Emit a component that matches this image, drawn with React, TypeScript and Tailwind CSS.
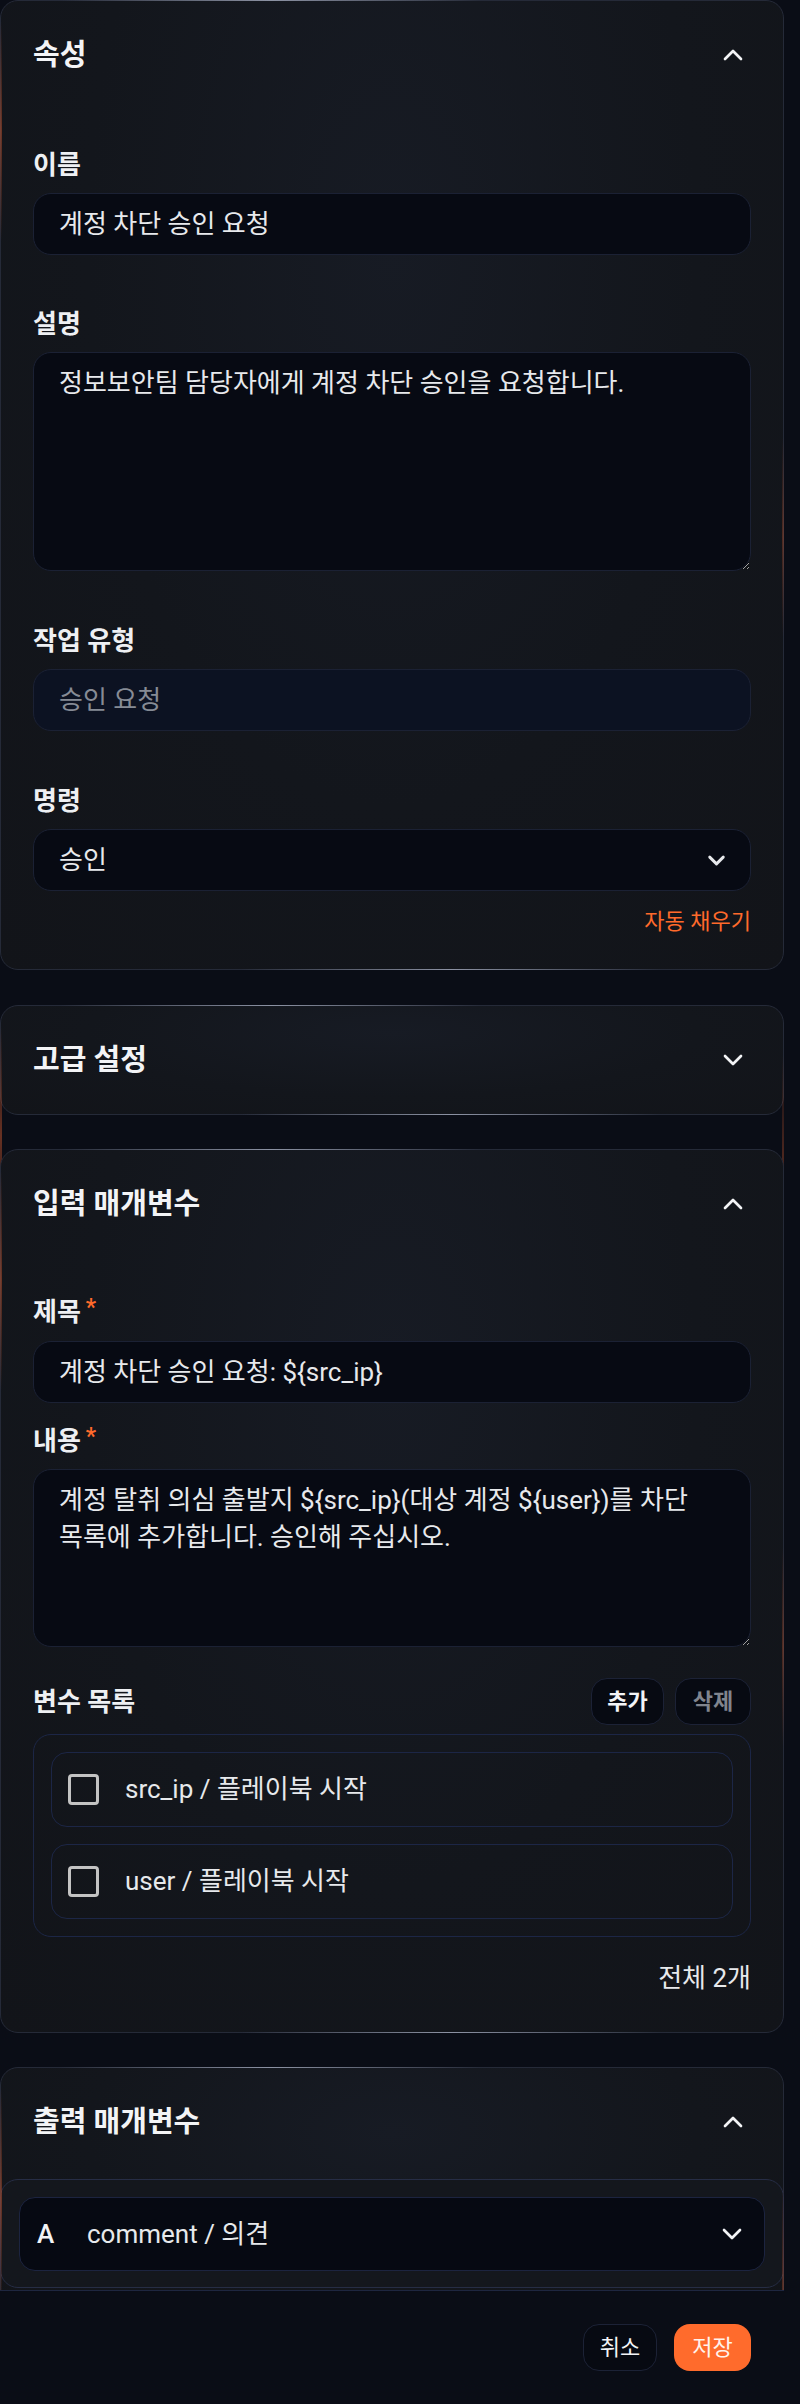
import React from 'react';
import { ChevronUp, ChevronDown } from 'lucide-react';

const FONT = "font-['Roboto','Noto_Sans_CJK_KR',sans-serif]";

function Label({ children, required }: { children: React.ReactNode; required?: boolean }) {
  return (
    <div className="flex items-start text-[26px] leading-[36px] font-semibold text-[#eef0f3]">
      <span>{children}</span>
      {required && <span className="ml-[5px] text-[23px] leading-[28px] text-[#ff6a2b]">*</span>}
    </div>
  );
}

function Card({
  title,
  open = true,
  className = '',
  children,
}: {
  title: string;
  open?: boolean;
  className?: string;
  children?: React.ReactNode;
}) {
  return (
    <div
      className={`relative shrink-0 rounded-[18px] border border-[#252a38] bg-[radial-gradient(ellipse_at_50%_25%,#171b24_0%,#13161c_55%,#121419_100%)] ${className}`}
    >
      {/* border shine */}
      <div className="pointer-events-none absolute -top-px left-[60px] h-px w-[420px] bg-gradient-to-r from-transparent via-[#8c92a3] to-transparent" />
      <div className="pointer-events-none absolute -bottom-px left-[240px] h-px w-[420px] bg-gradient-to-r from-transparent via-[#8c92a3] to-transparent" />
      <div className="pointer-events-none absolute -left-px top-[20px] h-[220px] w-[2px] bg-gradient-to-b from-transparent via-[#c4552e]/50 to-transparent" />
      <div className="pointer-events-none absolute -right-px top-[45%] h-[200px] w-[2px] bg-gradient-to-b from-transparent via-[#c4552e]/35 to-transparent" />

      <div className="flex h-[108px] items-center justify-between pl-[32px] pr-[34px]">
        <h2 className="text-[29px] leading-[40px] font-semibold text-[#f3f4f6]">{title}</h2>
        {open ? (
          <ChevronUp size={32} strokeWidth={2} className="text-[#f3f4f6]" />
        ) : (
          <ChevronDown size={32} strokeWidth={2} className="text-[#f3f4f6]" />
        )}
      </div>
      {children}
    </div>
  );
}

const boxCls =
  'flex h-[62px] w-full items-center rounded-[18px] border border-[#1b2134] pl-[25px] pr-[20px] text-[26px]';
const inputCls = `${boxCls} bg-[#070a13] text-[#e7e9ec]`;
const disabledCls = `${boxCls} bg-[#0c1222] text-[#868b95]`;

const textareaCls =
  'block w-full overflow-hidden whitespace-pre rounded-[18px] border border-[#1b2134] bg-[#070a13] pl-[25px] pr-[8px] pt-[12px] text-[26px] leading-[37px] text-[#e7e9ec] outline-none';

function VarItem({ label }: { label: string }) {
  return (
    <div className="flex h-[75px] items-center rounded-[16px] border border-[#1c2646] pl-[16px]">
      <span className="h-[31px] w-[31px] rounded-[4px] border-[3px] border-[#c3c3c3]" />
      <span className="ml-[26px] text-[26px] text-[#e7e9ec]">{label}</span>
    </div>
  );
}

export default function App() {
  return (
    <div className={`h-[2404px] w-[800px] overflow-hidden bg-[#0a0d16] ${FONT}`}>
      <div className="flex h-[2290px] w-[784px] flex-col overflow-hidden">
        {/* 속성 */}
        <Card title="속성">
          <div className="px-[32px] pb-[32px] pt-[38px]">
            <Label>이름</Label>
            <div className={`mt-[10px] ${inputCls}`}>계정 차단 승인 요청</div>

            <div className="mt-[51px]">
              <Label>설명</Label>
            </div>
            <textarea
              readOnly
              className={`mt-[10px] h-[219px] ${textareaCls}`}
              defaultValue="정보보안팀 담당자에게 계정 차단 승인을 요청합니다."
            />

            <div className="mt-[52px]">
              <Label>작업 유형</Label>
            </div>
            <div className={`mt-[10px] ${disabledCls}`}>승인 요청</div>

            <div className="mt-[52px]">
              <Label>명령</Label>
            </div>
            <div className={`mt-[10px] ${inputCls} justify-between pr-[19px]`}>
              <span>승인</span>
              <ChevronDown size={27} strokeWidth={2.6} className="text-[#e7e9ec]" />
            </div>

            <div className="mt-[16px] text-right text-[22px] leading-[30px] text-[#ff6a2b]">자동 채우기</div>
          </div>
        </Card>

        {/* 고급 설정 */}
        <Card title="고급 설정" open={false} className="mt-[35px]" />

        {/* 입력 매개변수 */}
        <Card title="입력 매개변수" className="mt-[34px]">
          <div className="px-[32px] pb-[36px] pt-[36px]">
            <Label required>제목</Label>
            <div className={`mt-[11px] ${inputCls}`}>{'계정 차단 승인 요청: ${src_ip}'}</div>

            <div className="mt-[20px]">
              <Label required>내용</Label>
            </div>
            <textarea
              readOnly
              className={`mt-[10px] h-[178px] ${textareaCls}`}
              defaultValue={'계정 탈취 의심 출발지 ${src_ip}(대상 계정 ${user})를 차단\n목록에 추가합니다. 승인해 주십시오.'}
            />

            <div className="mt-[31px] flex h-[47px] items-center justify-between">
              <Label>변수 목록</Label>
              <div className="flex gap-[11px]">
                <button className="h-[47px] w-[73px] rounded-[16px] border border-[#1c2236] bg-[#070a12] text-[22px] font-bold text-[#f3f4f6]">
                  추가
                </button>
                <button className="h-[47px] w-[76px] rounded-[16px] border border-[#1c2236] bg-[#070a12] text-[22px] font-semibold text-[#80858e]">
                  삭제
                </button>
              </div>
            </div>

            <div className="mt-[9px] flex flex-col gap-[17px] rounded-[18px] border border-[#1c2646] p-[17px]">
              <VarItem label="src_ip / 플레이북 시작" />
              <VarItem label="user / 플레이북 시작" />
            </div>

            <div className="mt-[23px] text-right text-[26px] leading-[36px] text-[#e7e9ec]">전체 2개</div>
          </div>
        </Card>

        {/* 출력 매개변수 */}
        <Card title="출력 매개변수" className="mt-[34px] pb-[40px]">
          <div className="-mx-px mt-[3px] rounded-[18px] border border-[#262d45] bg-[#14171d] px-[18px] pb-[16px] pt-[17px]">
            <div className="flex h-[74px] items-center rounded-[16px] border border-[#1c2440] bg-[#060912] pl-[17px] pr-[16px]">
              <span className="w-[50px] text-[26px] font-medium text-[#f3f4f6]">A</span>
              <span className="flex-1 text-[26px] text-[#e7e9ec]">comment / 의견</span>
              <ChevronDown size={32} strokeWidth={2} className="text-[#f3f4f6]" />
            </div>
          </div>
        </Card>
      </div>

      {/* footer */}
      <div className="flex w-[784px] justify-end gap-[17px] border-t border-[#1e2640] pr-[33px] pt-[33px]">
        <button className="h-[47px] w-[74px] rounded-[16px] border border-[#1c2236] bg-[#070a12] text-[22px] text-[#f3f4f6]">
          취소
        </button>
        <button className="h-[47px] w-[77px] rounded-[16px] bg-[#ff6b2c] text-[22px] text-[#fff3ec]">저장</button>
      </div>
    </div>
  );
}
